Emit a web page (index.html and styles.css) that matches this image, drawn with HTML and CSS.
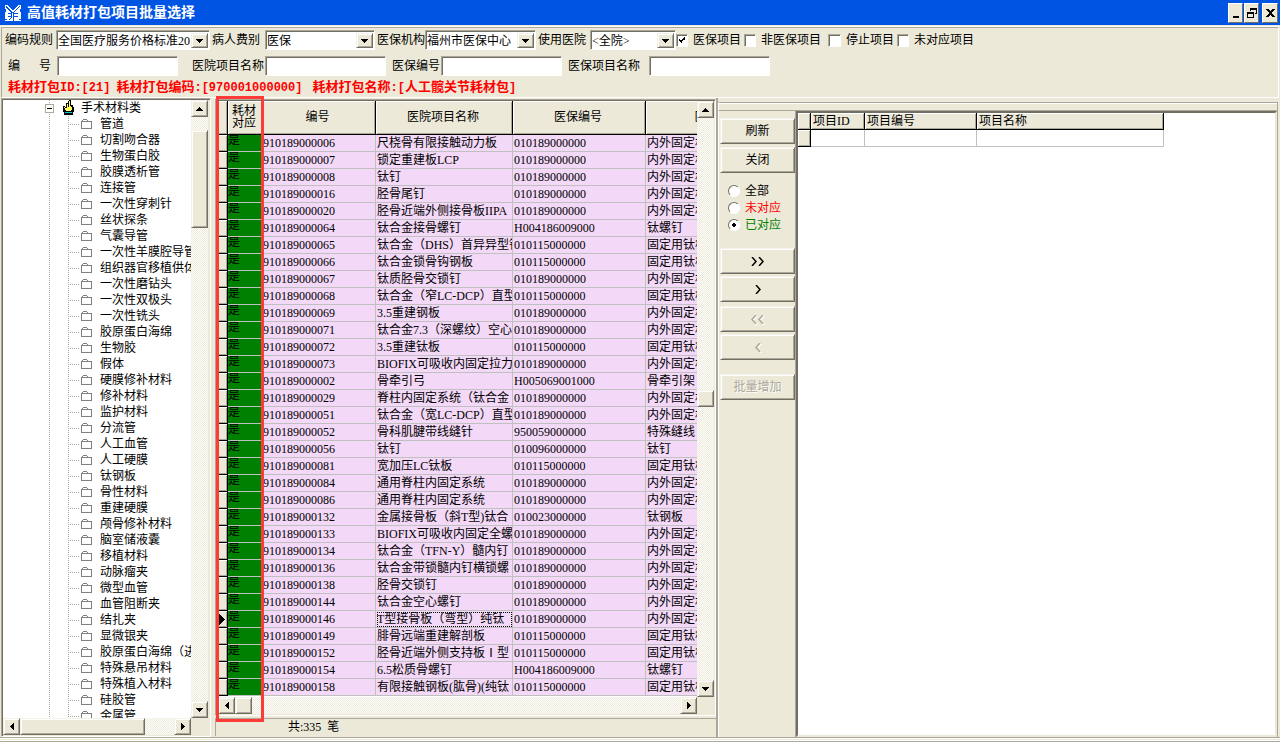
FILE: index.html
```html
<!DOCTYPE html>
<html lang="zh-CN">
<head>
    <meta charset="UTF-8">
    <title>高值耗材打包项目批量选择</title>
    <link rel="stylesheet" href="styles.css">
</head>
<body>
    <svg class="sprite" aria-hidden="true">
        <symbol id="down" viewBox="0 0 7 4"><path d="M0 0h7v1H6v1H5v1H4v1H3V3H2V2H1V1H0z"/></symbol>
        <symbol id="up" viewBox="0 0 7 4"><path d="M3 0h1v1h1v1h1v1h1v1H0V3h1V2h1V1h1z"/></symbol>
        <symbol id="left" viewBox="0 0 4 7"><path d="M3 0h1v7H3V6H2V5H1V4H0V3h1V2h1V1h1z"/></symbol>
        <symbol id="right" viewBox="0 0 4 7"><path d="M0 0h1v1h1v1h1v1h1v1H3v1H2v1H1v1H0z"/></symbol>
    </svg>

    <header class="titlebar">
        <svg class="logo" viewBox="0 0 16 16" aria-hidden="true">
            <path fill="#fff" d="M0 0h3v1h1v1h1v1h1v1h1v1h2V4h1V3h1V2h1V1h1V0h3v16H0z"/>
            <path fill="#0054e3" d="M1 1h1v1h1v1h1v1h1v1h1v1h1v1h2V6h1V5h1V4h1V3h1V2h1V1h1v1h-1v1h-1v1h-1v1h-1v1h-1v1h-1v1h4v1H9v2h4v1H9v4H8V8H7v5H6v1H5v1H4v-1h1v-1h1v-1H3v-1h3V9H3V8h3V7H5V6H4V5H3V4H2V3H1z"/>
            <path fill="#0054e3" d="M0 4h1v3H0zM15 4h1v3h-1zM0 14h2v1H0zM14 14h2v1h-2z"/>
        </svg>
        <h1>高值耗材打包项目批量选择</h1>
        <div class="win-buttons">
            <button class="win-btn" aria-label="最小化"><svg viewBox="0 0 10 10"><path d="M2 8h6v2H2z"/></svg></button>
            <button class="win-btn" aria-label="还原"><svg viewBox="0 0 10 10"><path d="M3 0h7v6H8V5h1V2H4v1H3zM0 4h7v6H0zM1 6v3h5V6z" fill-rule="evenodd"/></svg></button>
            <button class="win-btn close" aria-label="关闭窗口"><svg viewBox="0 0 10 10"><path d="M1 1h3v1h1v1h1V2h1V1h3v1H9v1H8v1H7v2h1v1h1v1h1v1H7V8H6V7H5v1H4v1H1V8h1V7h1V6h1V4H3V3H2V2H1z"/></svg></button>
        </div>
    </header>

    <form class="filters">
        <div class="filter-row row-top">
            <label for="rule">编码规则</label>
            <span class="combo"><select id="rule"><option>全国医疗服务价格标准20</option></select><span class="raised arrow"><svg class="v"><use href="#down"/></svg></span></span>
            <label for="feeType">病人费别</label>
            <span class="combo"><select id="feeType"><option>医保</option></select><span class="raised arrow"><svg class="v"><use href="#down"/></svg></span></span>
            <label for="org">医保机构</label>
            <span class="combo"><select id="org"><option>福州市医保中心</option></select><span class="raised arrow"><svg class="v"><use href="#down"/></svg></span></span>
            <label for="hospital">使用医院</label>
            <span class="combo"><select id="hospital"><option>&lt;全院&gt;</option></select><span class="raised arrow"><svg class="v"><use href="#down"/></svg></span></span>
            <label class="check"><input type="checkbox" checked>医保项目</label>
            <label class="check"><input type="checkbox">非医保项目</label>
            <label class="check"><input type="checkbox">停止项目</label>
            <label class="check"><input type="checkbox">未对应项目</label>
        </div>
        <div class="filter-row row-bottom">
            <label class="spread" for="code"><span>编</span><span>号</span></label>
            <input type="text" id="code">
            <label for="hisName">医院项目名称</label>
            <input type="text" id="hisName">
            <label for="insCode">医保编号</label>
            <input type="text" id="insCode">
            <label for="insName">医保项目名称</label>
            <input type="text" id="insName">
        </div>
        <p class="package">
            <span>耗材打包<b>ID:[21]</b></span>
            <span>耗材打包编码<b>:[970001000000]</b></span>
            <span class="pkg-name">耗材打包名称<b>:[</b>人工髋关节耗材包<b>]</b></span>
        </p>
    </form>

    <main class="work">
        <nav class="tree-panel">
            <div class="tree">
                <div class="tree-root">
                    <button class="toggle" aria-label="折叠"></button>
                    <svg class="hand" viewBox="0 0 11 16" aria-hidden="true">
                        <path fill="#000" d="M6 0h2v5h2v2h1v5h-1v3H1v-3H0V6h2v1h1V3h2V1h1z"/>
                        <path fill="#ffff60" d="M6 1h1v5h1v1h1v3H8v1H3v-1H2V8H1V7h1v1h2V4h1v3h1z"/>
                        <path fill="#00c8d8" d="M2 12h7v1H2z"/>
                    </svg>
                    <span>手术材料类</span>
                </div>
                <ul>
                    <li>管道</li>
                    <li>切割吻合器</li>
                    <li>生物蛋白胶</li>
                    <li>胶膜透析管</li>
                    <li>连接管</li>
                    <li>一次性穿刺针</li>
                    <li>丝状探条</li>
                    <li>气囊导管</li>
                    <li>一次性羊膜腔导管</li>
                    <li>组织器官移植供体</li>
                    <li>一次性磨钻头</li>
                    <li>一次性双极头</li>
                    <li>一次性铣头</li>
                    <li>胶原蛋白海绵</li>
                    <li>生物胶</li>
                    <li>假体</li>
                    <li>硬膜修补材料</li>
                    <li>修补材料</li>
                    <li>监护材料</li>
                    <li>分流管</li>
                    <li>人工血管</li>
                    <li>人工硬膜</li>
                    <li>钛钢板</li>
                    <li>骨性材料</li>
                    <li>重建硬膜</li>
                    <li>颅骨修补材料</li>
                    <li>脑室储液囊</li>
                    <li>移植材料</li>
                    <li>动脉瘤夹</li>
                    <li>微型血管</li>
                    <li>血管阻断夹</li>
                    <li>结扎夹</li>
                    <li>显微银夹</li>
                    <li>胶原蛋白海绵（进</li>
                    <li>特殊悬吊材料</li>
                    <li>特殊植入材料</li>
                    <li>硅胶管</li>
                    <li>金属管</li>
                </ul>
            </div>
            <div class="vscroll tree-v">
                <button type="button" class="raised" aria-label="向上"><svg class="v"><use href="#up"/></svg></button>
                <span class="before"></span><span class="raised thumb"></span><span class="after"></span>
                <button type="button" class="raised" aria-label="向下"><svg class="v"><use href="#down"/></svg></button>
            </div>
            <div class="hscroll tree-h">
                <button type="button" class="raised" aria-label="向左"><svg class="h"><use href="#left"/></svg></button>
                <span class="raised thumb"></span><span class="after"></span>
                <button type="button" class="raised" aria-label="向右"><svg class="h"><use href="#right"/></svg></button>
            </div>
        </nav>

        <section class="grid-panel">
            <div class="grid-box">
                <div class="grid-view">
                    <table class="items">
                        <colgroup><col class="c-mark"><col class="c-flag"><col class="c-code"><col class="c-name"><col class="c-ins"><col class="c-insname"></colgroup>
                        <thead>
                            <tr><th></th><th>耗材<br>对应</th><th>编号</th><th>医院项目名称</th><th>医保编号</th><th>医保项目名称</th></tr>
                        </thead>
                        <tbody>
                            <tr><th></th><td>是</td><td>910189000006</td><td>尺桡骨有限接触动力板</td><td>010189000000</td><td>内外固定材</td></tr>
                            <tr><th></th><td>是</td><td>910189000007</td><td>锁定重建板LCP</td><td>010189000000</td><td>内外固定材</td></tr>
                            <tr><th></th><td>是</td><td>910189000008</td><td>钛钉</td><td>010189000000</td><td>内外固定材</td></tr>
                            <tr><th></th><td>是</td><td>910189000016</td><td>胫骨尾钉</td><td>010189000000</td><td>内外固定材</td></tr>
                            <tr><th></th><td>是</td><td>910189000020</td><td>胫骨近端外侧接骨板IIPA</td><td>010189000000</td><td>内外固定材</td></tr>
                            <tr><th></th><td>是</td><td>910189000064</td><td>钛合金接骨螺钉</td><td>H004186009000</td><td>钛螺钉</td></tr>
                            <tr><th></th><td>是</td><td>910189000065</td><td>钛合金（DHS）首异异型钢</td><td>010115000000</td><td>固定用钛板</td></tr>
                            <tr><th></th><td>是</td><td>910189000066</td><td>钛合金锁骨钩钢板</td><td>010115000000</td><td>固定用钛板</td></tr>
                            <tr><th></th><td>是</td><td>910189000067</td><td>钛质胫骨交锁钉</td><td>010189000000</td><td>内外固定材</td></tr>
                            <tr><th></th><td>是</td><td>910189000068</td><td>钛合金（窄LC-DCP）直型</td><td>010115000000</td><td>固定用钛板</td></tr>
                            <tr><th></th><td>是</td><td>910189000069</td><td>3.5重建钢板</td><td>010189000000</td><td>内外固定材</td></tr>
                            <tr><th></th><td>是</td><td>910189000071</td><td>钛合金7.3（深螺纹）空心</td><td>010189000000</td><td>内外固定材</td></tr>
                            <tr><th></th><td>是</td><td>910189000072</td><td>3.5重建钛板</td><td>010115000000</td><td>固定用钛板</td></tr>
                            <tr><th></th><td>是</td><td>910189000073</td><td>BIOFIX可吸收内固定拉力</td><td>010189000000</td><td>内外固定材</td></tr>
                            <tr><th></th><td>是</td><td>910189000002</td><td>骨牵引弓</td><td>H005069001000</td><td>骨牵引架</td></tr>
                            <tr><th></th><td>是</td><td>910189000029</td><td>脊柱内固定系统（钛合金</td><td>010189000000</td><td>内外固定材</td></tr>
                            <tr><th></th><td>是</td><td>910189000051</td><td>钛合金（宽LC-DCP）直型</td><td>010189000000</td><td>内外固定材</td></tr>
                            <tr><th></th><td>是</td><td>910189000052</td><td>骨科肌腱带线缝针</td><td>950059000000</td><td>特殊缝线</td></tr>
                            <tr><th></th><td>是</td><td>910189000056</td><td>钛钉</td><td>010096000000</td><td>钛钉</td></tr>
                            <tr><th></th><td>是</td><td>910189000081</td><td>宽加压LC钛板</td><td>010115000000</td><td>固定用钛板</td></tr>
                            <tr><th></th><td>是</td><td>910189000084</td><td>通用脊柱内固定系统</td><td>010189000000</td><td>内外固定材</td></tr>
                            <tr><th></th><td>是</td><td>910189000086</td><td>通用脊柱内固定系统</td><td>010189000000</td><td>内外固定材</td></tr>
                            <tr><th></th><td>是</td><td>910189000132</td><td>金属接骨板（斜T型)钛合</td><td>010023000000</td><td>钛钢板</td></tr>
                            <tr><th></th><td>是</td><td>910189000133</td><td>BIOFIX可吸收内固定全螺</td><td>010189000000</td><td>内外固定材</td></tr>
                            <tr><th></th><td>是</td><td>910189000134</td><td>钛合金（TFN-Y）髓内钉</td><td>010189000000</td><td>内外固定材</td></tr>
                            <tr><th></th><td>是</td><td>910189000136</td><td>钛合金带锁髓内钉横锁螺</td><td>010189000000</td><td>内外固定材</td></tr>
                            <tr><th></th><td>是</td><td>910189000138</td><td>胫骨交锁钉</td><td>010189000000</td><td>内外固定材</td></tr>
                            <tr><th></th><td>是</td><td>910189000144</td><td>钛合金空心螺钉</td><td>010189000000</td><td>内外固定材</td></tr>
                            <tr class="current"><th><svg viewBox="0 0 6 11"><path d="M0 0l6 5.500L0 11z"/></svg></th><td>是</td><td>910189000146</td><td>T型接骨板（弯型）纯钛</td><td>010189000000</td><td>内外固定材</td></tr>
                            <tr><th></th><td>是</td><td>910189000149</td><td>腓骨远端重建解剖板</td><td>010115000000</td><td>固定用钛板</td></tr>
                            <tr><th></th><td>是</td><td>910189000152</td><td>胫骨近端外侧支持板Ⅰ型</td><td>010115000000</td><td>固定用钛板</td></tr>
                            <tr><th></th><td>是</td><td>910189000154</td><td>6.5松质骨螺钉</td><td>H004186009000</td><td>钛螺钉</td></tr>
                            <tr><th></th><td>是</td><td>910189000158</td><td>有限接触钢板(肱骨)(纯钛</td><td>010115000000</td><td>固定用钛板</td></tr>
                        </tbody>
                    </table>
                </div>
                <div class="vscroll grid-v">
                    <button type="button" class="raised" aria-label="向上"><svg class="v"><use href="#up"/></svg></button>
                    <span class="before"></span><span class="raised thumb"></span><span class="after"></span>
                    <button type="button" class="raised" aria-label="向下"><svg class="v"><use href="#down"/></svg></button>
                </div>
                <div class="hscroll grid-h">
                    <button type="button" class="raised" aria-label="向左"><svg class="h"><use href="#left"/></svg></button>
                    <span class="raised thumb"></span><span class="after"></span>
                    <button type="button" class="raised" aria-label="向右"><svg class="h"><use href="#right"/></svg></button>
                </div>
            </div>
            <div class="status">共:335&nbsp; 笔</div>
            <div class="highlight"></div>
        </section>

        <section class="right-panel">
            <div class="band"></div>
            <div class="right-body">
                <div class="actions">
                    <button type="button" class="raised">刷新</button>
                    <button type="button" class="raised">关闭</button>
                    <fieldset>
                        <label><input type="radio" name="match">全部</label>
                        <label class="red"><input type="radio" name="match">未对应</label>
                        <label class="green"><input type="radio" name="match" checked>已对应</label>
                    </fieldset>
                    <button type="button" class="raised" aria-label="全部添加"><svg viewBox="0 0 13 9"><path d="M1 0l4 4.500L1 9M8 0l4 4.500L8 9"/></svg></button>
                    <button type="button" class="raised" aria-label="添加"><svg viewBox="0 0 13 9"><path d="M5 0l4 4.500L5 9"/></svg></button>
                    <button type="button" class="raised remove" aria-label="全部移除" disabled><svg viewBox="0 0 13 9"><path d="M5 0L1 4.500 5 9M12 0L8 4.500 12 9"/></svg></button>
                    <button type="button" class="raised" aria-label="移除" disabled><svg viewBox="0 0 13 9"><path d="M9 0L5 4.500 9 9"/></svg></button>
                    <button type="button" class="raised batch" disabled>批量增加</button>
                </div>
                <div class="picked-box">
                    <table class="picked">
                        <colgroup><col class="p-mark"><col class="p-id"><col class="p-code"><col class="p-name"></colgroup>
                        <thead><tr><th></th><th>项目ID</th><th>项目编号</th><th>项目名称</th></tr></thead>
                        <tbody><tr><th></th><td></td><td></td><td></td></tr></tbody>
                    </table>
                </div>
            </div>
        </section>
    </main>
    <footer class="bottom-bar"></footer>
</body>
</html>
```

FILE: styles.css
```css
* {
    box-sizing: border-box;
}

body {
    margin: 0;
    height: 100vh;
    display: flex;
    flex-direction: column;
    overflow: hidden;
    background: #ece9d8;
    color: #000;
    font: 12px/16px "Liberation Serif", "Noto Sans CJK SC", sans-serif;
}

button, input, select {
    font: inherit;
    color: inherit;
    margin: 0;
    padding: 0;
    border-radius: 0;
}

svg {
    display: block;
    shape-rendering: crispEdges;
}

svg.v {
    width: 7px;
    height: 4px;
}

svg.h {
    width: 4px;
    height: 7px;
}

.sprite {
    position: absolute;
    width: 0;
    height: 0;
}

.raised {
    background: #ece9d8;
    border: 1px solid;
    border-color: #f4f2e8 #716f64 #716f64 #f4f2e8;
    box-shadow: inset 1px 1px #fff, inset -1px -1px #aca899;
    display: flex;
    align-items: center;
    justify-content: center;
}

/* title bar */
.titlebar {
    flex: none;
    height: 25px;
    display: flex;
    align-items: center;
    gap: 6px;
    padding: 0 2px 0 5px;
    background: #0054e3;
    color: #fff;
}

.titlebar h1 {
    flex: 1;
    margin: 0;
    font-size: 14px;
    line-height: 20px;
}

.logo {
    width: 16px;
    height: 16px;
}

.win-buttons {
    display: flex;
    gap: 1px;
}

.win-btn {
    width: 15px;
    height: 20px;
    display: flex;
    align-items: center;
    justify-content: center;
    background: #ece9d8;
    border: 1px solid;
    border-color: #fff #716f64 #716f64 #fff;
    color: #000;
}

.win-btn svg {
    flex: none;
    width: 10px;
    height: 10px;
}

.win-btn.close {
    margin-left: 2px;
    width: 16px;
}

/* filters */
.filters {
    flex: none;
    margin: 2px 1px 0;
    padding: 2px 3px 0;
    border: 1px solid;
    border-color: #aca899 #fff #fff #aca899;
    box-shadow: 0 -1px #fff;
    height: 71px;
}

.filter-row {
    display: grid;
    align-items: center;
    white-space: nowrap;
}

.row-top {
    grid-template-columns: 51px 154px 55px 110px 50px 111px 54px 86px 68px 80px 73px 80px;
    height: 20px;
}

.row-bottom {
    grid-template-columns: 52px 121px 87px 121px 55px 121px 87px 121px;
    height: 20px;
    margin-top: 6px;
}

.row-top label:nth-of-type(2),
.row-top label:nth-of-type(3),
.row-top label:nth-of-type(4) {
    padding-left: 2px;
}

.row-bottom label {
    padding: 0 6px;
}

.row-bottom label:nth-of-type(2) {
    padding: 0 1px;
    text-align: right;
}

.spread {
    display: flex;
    justify-content: space-between;
}

.row-bottom .spread {
    padding-left: 3px;
}

.combo {
    display: flex;
    height: 20px;
    background: #fff;
    border: 1px solid;
    border-color: #aca899 #fff #fff #aca899;
    box-shadow: inset 1px 1px #716f64;
    padding: 2px 1px 1px 1px;
}

.combo select {
    flex: 1;
    min-width: 0;
    appearance: none;
    border: 0;
    background: transparent;
    overflow: hidden;
    outline: none;
}

.combo .arrow {
    flex: none;
    width: 17px;
    pointer-events: none;
}

.filters input[type="text"] {
    width: 100%;
    height: 20px;
    background: #fff;
    border: 1px solid;
    border-color: #aca899 #fff #fff #aca899;
    box-shadow: inset 1px 1px #716f64;
    outline: none;
}

.check {
    display: flex;
    align-items: center;
    justify-content: flex-end;
    gap: 5px;
    padding-right: 3px;
}

.check input {
    appearance: none;
    width: 13px;
    height: 13px;
    background: #fff;
    border: 1px solid;
    border-color: #aca899 #fff #fff #aca899;
    box-shadow: inset 1px 1px #716f64;
}

.check input:checked {
    background: #fff url("data:image/svg+xml,%3Csvg xmlns='http://www.w3.org/2000/svg' viewBox='0 0 11 11' shape-rendering='crispEdges'%3E%3Cpath d='M2 4h1v1h1v1h1V5h1V4h1V3h1V2h1v3H8v1H7v1H6v1H5v1H4V8H3V7H2z'/%3E%3C/svg%3E");
}

.package {
    display: flex;
    gap: 6px;
    margin: 3px 0 0;
    padding-left: 3px;
    color: #f00;
    font-size: 13px;
    font-weight: bold;
    white-space: nowrap;
}

.package b {
    font: bold 12px/16px "Liberation Mono", monospace;
}

.pkg-name {
    margin-left: 4px;
}

/* main area */
.work {
    flex: 1;
    min-height: 0;
    display: flex;
    padding: 0 2px 0 1px;
}

.tree-panel {
    flex: none;
    width: 210px;
    display: grid;
    grid-template: minmax(0, 1fr) 17px / minmax(0, 1fr) 17px;
    border: 1px solid;
    border-color: #aca899 #fff #fff #aca899;
    box-shadow: inset 1px 1px #716f64;
    padding: 1px 2px 1px 1px;
}

.tree {
    overflow: hidden;
    background: #fff url("data:image/svg+xml,%3Csvg xmlns='http://www.w3.org/2000/svg' width='1' height='2' shape-rendering='crispEdges'%3E%3Cpath fill='%23aca899' d='M0 0h1v1H0z'/%3E%3C/svg%3E") repeat-y 46px 0;
    white-space: nowrap;
}

.tree-root {
    display: flex;
    align-items: center;
    height: 16px;
    padding-left: 42px;
}

.toggle {
    width: 9px;
    height: 9px;
    border: 1px solid #aca899;
    background: #fff linear-gradient(#000, #000) no-repeat center / 5px 1px;
}

.tree-root .hand {
    width: 11px;
    height: 16px;
    margin: 0 7px 0 9px;
}

.tree ul {
    margin: 0;
    padding: 0 0 0 65px;
    list-style: none;
}

.tree li {
    height: 16px;
    padding-left: 32px;
    background:
        url("data:image/svg+xml,%3Csvg xmlns='http://www.w3.org/2000/svg' width='12' height='11' shape-rendering='crispEdges'%3E%3Cpath fill='%23808080' d='M2 0h4v1H2zM1 1h1v1H1zM6 1h1v1H6zM0 2h11v1H0zM0 3h1v7H0zM10 3h1v7h-1zM0 9h11v1H0z'/%3E%3C/svg%3E") no-repeat 13px 3px,
        url("data:image/svg+xml,%3Csvg xmlns='http://www.w3.org/2000/svg' width='2' height='16' shape-rendering='crispEdges'%3E%3Cpath fill='%23aca899' d='M0 0h1v1H0zM0 2h1v1H0zM0 4h1v1H0zM0 6h1v1H0zM0 8h1v1H0zM0 10h1v1H0zM0 12h1v1H0zM0 14h1v1H0z'/%3E%3C/svg%3E") no-repeat 0 0,
        repeating-linear-gradient(90deg, #aca899 0 1px, transparent 1px 2px) no-repeat 2px 8px / 9px 1px;
}

/* scroll bars */
.vscroll, .hscroll {
    display: flex;
    background: repeating-conic-gradient(#ece9d8 0 25%, #fff 0 50%) 0 0 / 2px 2px;
}

.vscroll {
    flex-direction: column;
}

.vscroll button {
    flex: none;
    height: 17px;
}

.hscroll button {
    flex: none;
    width: 17px;
}

.tree-v .before { flex: 13; }
.tree-v .thumb { flex: 96; }
.tree-v .after { flex: 475; }
.tree-h .thumb { flex: 125; }
.tree-h .after { flex: 29; }
.grid-v .before { flex: 272; }
.grid-v .thumb { flex: none; height: 17px; }
.grid-v .after { flex: 273; }
.grid-h .thumb { flex: none; width: 17px; }
.grid-h .after { flex: 1; }

/* item grid */
.grid-panel {
    position: relative;
    flex: none;
    width: 501px;
    margin: 1px 0 0 4px;
    display: flex;
    flex-direction: column;
}

.grid-box {
    flex: 1;
    min-height: 0;
    display: grid;
    grid-template: minmax(0, 1fr) 17px / minmax(0, 1fr) 17px;
    border: 1px solid;
    border-color: #aca899 #fff #fff #aca899;
    box-shadow: inset 1px 1px #716f64;
    padding: 1px 1px 1px 2px;
}

.grid-view {
    overflow: hidden;
    background: #fff;
}

table {
    table-layout: fixed;
    border-collapse: separate;
    border-spacing: 0;
    white-space: nowrap;
}

.items { width: 600px; }
.c-mark { width: 10px; }
.c-flag { width: 34px; }
.c-code { width: 114px; }
.c-name { width: 137px; }
.c-ins { width: 133px; }
.c-insname { width: 172px; }

td, th {
    padding: 0;
    overflow: hidden;
    font-weight: normal;
}

th {
    background: #ece9d8;
    border: solid #000;
    border-width: 0 1px 1px 0;
    box-shadow: inset 1px 1px #fff, inset -1px -1px #aca899;
}

.items thead th {
    height: 34px;
    padding: 0 2px 2px 0;
    line-height: 12px;
}

.items tbody th, .items td {
    height: 17px;
}

.items th svg {
    width: 6px;
    height: 11px;
    margin-left: 1px;
}

.items td {
    padding-left: 1px;
    background: #f3d9f7;
    border: solid #c0c0c0;
    border-width: 0 1px 1px 0;
}

.items td:nth-child(2) {
    padding: 0 0 6px;
    background: #008000;
    line-height: 10px;
}

.items td:nth-child(2), .items thead th:nth-child(2) {
    border-right-width: 0;
}

.items .current td:nth-child(4) {
    outline: 1px dotted #000;
    outline-offset: -2px;
}

.status {
    flex: none;
    height: 18px;
    margin: 2px 0 1px;
    padding-left: 72px;
    border-top: 1px solid #aca899;
    border-left: 1px solid #aca899;
}

.highlight {
    position: absolute;
    left: 1px;
    top: -3px;
    bottom: 15px;
    width: 48px;
    border: 3px solid #ff3b38;
    pointer-events: none;
}

/* right side */
.right-panel {
    flex: 1;
    min-width: 0;
    display: flex;
    flex-direction: column;
    border-left: 2px solid #aca899;
}

.band {
    flex: none;
    height: 9px;
    margin-top: 4px;
    border: 1px solid;
    border-color: #aca899 #aca899 #aca899 #fff;
    box-shadow: inset 0 1px #fff;
}

.right-body {
    flex: 1;
    min-height: 0;
    display: flex;
    border-right: 1px solid #aca899;
}

.actions {
    flex: none;
    width: 78px;
    display: flex;
    flex-direction: column;
    padding: 7px 1px 0;
    border-left: 1px solid #fff;
}

.actions button {
    flex: none;
    height: 26px;
    margin-bottom: 2px;
}

.actions button svg {
    width: 13px;
    height: 9px;
    fill: none;
    stroke: #000;
    stroke-width: 1.5px;
    shape-rendering: auto;
}

.actions button:first-child {
    margin-bottom: 3px;
}

.actions button:disabled {
    color: #aca899;
    text-shadow: 1px 1px #fff;
}

.actions button:disabled svg {
    stroke: #aca899;
    filter: drop-shadow(1px 1px 0 #fff);
}

.actions .remove {
    margin-top: 2px;
}

.actions .batch {
    margin-top: 12px;
}

.actions fieldset {
    margin: 8px 0 15px;
    padding: 0 0 0 8px;
    border: 0;
    display: grid;
    gap: 1px;
}

.actions label {
    display: flex;
    align-items: center;
    gap: 5px;
}

.actions input {
    appearance: none;
    width: 12px;
    height: 12px;
    border: 1px solid;
    border-color: #716f64 #fff #fff #716f64;
    border-radius: 50%;
    background: #fff;
}

.actions input:checked {
    background: radial-gradient(circle, #000 2px, #fff 2px);
}

.red {
    color: #f00;
}

.green {
    color: #008000;
}

.picked-box {
    flex: 1;
    min-width: 0;
    overflow: hidden;
    background: #fff;
    border: 2px solid;
    border-color: #716f64 #ece9d8 #ece9d8 #716f64;
    box-shadow: -1px 0 #aca899;
}

.picked { width: 366px; }
.p-mark { width: 13px; }
.p-id { width: 54px; }
.p-code { width: 112px; }
.p-name { width: 187px; }

.picked th {
    height: 17px;
    padding-left: 2px;
    text-align: left;
}

.picked td {
    height: 17px;
    border: solid #c0c0c0;
    border-width: 0 1px 1px 0;
}

.bottom-bar {
    flex: none;
    height: 5px;
    border-top: 1px solid #aca899;
    border-bottom: 1px solid #aca899;
    box-shadow: inset 0 1px #fff, inset 0 -1px #fff;
}
```
